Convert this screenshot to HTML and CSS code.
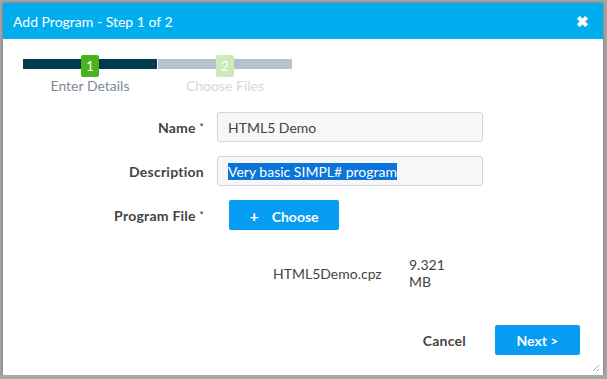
FILE: index.html
```html
<!DOCTYPE html>
<html lang="en">
<head>
  <meta charset="UTF-8" />
  <title>Add Program</title>
  <link rel="stylesheet" href="styles.css">
</head>
<body>

<div class="dialog">
  <header class="dialog-header">
    <span class="dialog-title">Add Program - Step 1 of 2</span>
    <span class="close">&#10006;</span>
  </header>

  <div class="stepper">
    <div class="step done">
      <div class="step-track"><span class="badge">1</span></div>
      <div class="step-label">Enter Details</div>
    </div>
    <div class="step">
      <div class="step-track"><span class="badge">2</span></div>
      <div class="step-label">Choose Files</div>
    </div>
  </div>

  <form class="form">
    <div class="row">
      <label class="label">Name <sup>*</sup></label>
      <input class="field" type="text" value="HTML5 Demo">
    </div>
    <div class="row">
      <label class="label">Description</label>
      <div class="field"><span class="selected">Very basic SIMPL# program</span></div>
    </div>
    <div class="row">
      <label class="label">Program File <sup>*</sup></label>
      <button type="button" class="btn choose"><span class="plus">+</span>Choose</button>
    </div>
    <div class="file-row">
      <span class="file-name">HTML5Demo.cpz</span>
      <span class="file-size">9.321<br>MB</span>
    </div>
  </form>

  <footer class="dialog-footer">
    <button type="button" class="cancel">Cancel</button>
    <button type="button" class="btn next">Next &gt;</button>
  </footer>
  <span class="grip"></span>
</div>

</body>
</html>
```

FILE: styles.css
```css
* {
  box-sizing: border-box;
}

body {
  margin: 0;
  font-family: 'Lato', sans-serif;
  background: #a6a6a6;
  color: #444;
}

.dialog {
  position: relative;
  margin: 3px 0 0 3px;
  width: 600px;
  height: 372px;
  background: #fff;
  box-shadow: 0 0 3px rgba(0,0,0,0.35);
  display: flex;
  flex-direction: column;
}

.dialog-header {
  height: 36px;
  background: #00adef;
  color: #fff;
  display: flex;
  justify-content: space-between;
  align-items: center;
  padding: 0 14px 0 10px;
}

.dialog-title {
  font-size: 14px;
}

.close {
  font-size: 15px;
  font-weight: bold;
}

/* Stepper */
.stepper {
  display: flex;
  gap: 1px;
  padding: 16px 0 0 20px;
}

.step {
  width: 134px;
  display: flex;
  flex-direction: column;
  align-items: center;
}

.step-track {
  width: 100%;
  height: 22px;
  display: flex;
  justify-content: center;
  background: linear-gradient(to bottom, transparent 4px, #b4c3cb 4px, #b4c3cb 14px, transparent 14px);
}

.step.done .step-track {
  background: linear-gradient(to bottom, transparent 4px, #003a4f 4px, #003a4f 14px, transparent 14px);
}

.badge {
  width: 18px;
  height: 22px;
  border-radius: 2px;
  background: #cdeab9;
  color: #fff;
  font-size: 13px;
  text-align: center;
  line-height: 22px;
}

.step.done .badge {
  background: #4cb21b;
}

.step-label {
  font-size: 14px;
  color: #d3d8dd;
}

.step.done .step-label {
  color: #7b8b98;
}

/* Form */
.form {
  display: flex;
  flex-direction: column;
  gap: 14px;
  padding-top: 18px;
}

.row {
  display: flex;
  align-items: center;
}

.label {
  width: 214px;
  padding-right: 13px;
  text-align: right;
  font-size: 14px;
  font-weight: bold;
  letter-spacing: 0.25px;
  color: #444;
}

.label sup {
  font-size: 10px;
  vertical-align: 3px;
}

.field {
  width: 266px;
  height: 30px;
  border: 1px solid #d5d5d5;
  border-radius: 3px;
  background: #f7f7f7;
  padding: 0 10px;
  font-family: 'Lato', sans-serif;
  font-size: 14px;
  color: #444;
  display: flex;
  align-items: center;
}

.selected {
  background: #0a74d8;
  color: #fff;
  line-height: 17px;
}

.btn {
  border: none;
  border-radius: 2px;
  background: #069cf2;
  color: #fff;
  font-family: 'Lato', sans-serif;
  font-size: 14px;
  font-weight: bold;
  cursor: pointer;
}

.choose {
  width: 110px;
  height: 30px;
  margin-left: 12px;
}

.plus {
  font-size: 16px;
  margin-right: 13px;
}

.file-row {
  display: flex;
  align-items: center;
  padding: 12px 0 0 270px;
  font-size: 14px;
  color: #444;
}

.file-name {
  width: 136px;
}

.file-size {
  line-height: 17px;
}

/* Footer */
.dialog-footer {
  margin-top: auto;
  display: flex;
  justify-content: flex-end;
  align-items: center;
  gap: 29px;
  padding: 0 23px 20px 0;
}

.cancel {
  border: none;
  background: none;
  padding: 0;
  font-family: 'Lato', sans-serif;
  font-size: 14px;
  font-weight: bold;
  letter-spacing: 0.25px;
  color: #444;
}

.next {
  width: 85px;
  height: 30px;
}

.grip {
  position: absolute;
  right: 4px;
  bottom: 4px;
  width: 9px;
  height: 9px;
  background: repeating-linear-gradient(135deg, transparent 0 2px, #aaa 2px 3px);
  clip-path: polygon(100% 0, 100% 100%, 0 100%);
}
```
